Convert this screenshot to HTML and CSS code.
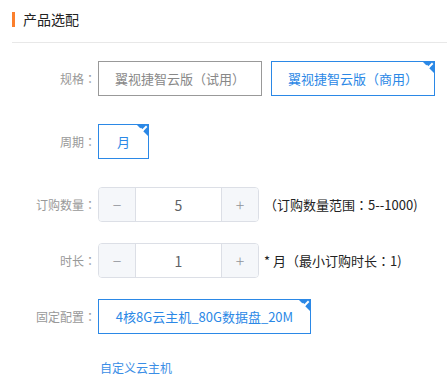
FILE: index.html
```html
<!DOCTYPE html>
<html lang="zh-CN">
<head>
    <meta charset="UTF-8">
    <title>产品选配</title>
    <link rel="stylesheet" href="styles.css">
</head>
<body>

<div class="panel">
    <div class="panel-title"><span>产品选配</span></div>

    <div class="form">
        <!-- 规格 -->
        <div class="form-row row-wide">
            <label class="form-label">规格<i class="colon" lang="zh-TW">：</i></label>
            <div class="options">
                <div class="option spec">翼视捷智云版（试用）</div>
                <div class="option spec active">翼视捷智云版（商用）</div>
            </div>
        </div>

        <!-- 周期 -->
        <div class="form-row row-wide">
            <label class="form-label">周期<i class="colon" lang="zh-TW">：</i></label>
            <div class="options">
                <div class="option period active">月</div>
            </div>
        </div>

        <!-- 订购数量 -->
        <div class="form-row">
            <label class="form-label">订购数量<i class="colon" lang="zh-TW">：</i></label>
            <div class="stepper">
                <span class="step-btn">&minus;</span>
                <input class="step-input" type="text" value="5">
                <span class="step-btn">+</span>
            </div>
            <span class="hint">（订购数量范围<i class="colon" lang="zh-TW">：</i>5--1000)</span>
        </div>

        <!-- 时长 -->
        <div class="form-row">
            <label class="form-label">时长<i class="colon" lang="zh-TW">：</i></label>
            <div class="stepper">
                <span class="step-btn">&minus;</span>
                <input class="step-input" type="text" value="1">
                <span class="step-btn">+</span>
            </div>
            <span class="hint">* 月（最小订购时长<i class="colon" lang="zh-TW">：</i>1)</span>
        </div>

        <!-- 固定配置 -->
        <div class="form-row">
            <label class="form-label">固定配置<i class="colon" lang="zh-TW">：</i></label>
            <div class="options">
                <div class="option config active">4核8G云主机_80G数据盘_20M</div>
            </div>
        </div>

        <div class="links">
            <a href="#">自定义云主机</a>
        </div>
    </div>
</div>

</body>
</html>
```

FILE: styles.css
```css
/* General Styling */
* {
    box-sizing: border-box;
    margin: 0;
    padding: 0;
    font-family: "Noto Sans CJK SC", "Noto Sans", sans-serif;
}

body {
    background: #fff;
    color: #333;
}

/* centered full-width colon */
.colon {
    font-style: normal;
    font-family: "Noto Sans CJK TC", sans-serif;
}

.panel-title {
    margin-left: 12px;
    padding: 12px 0 15px;
    border-bottom: 1px solid #e8e8e8;
}

.panel-title span {
    display: block;
    height: 15px;
    line-height: 15px;
    border-left: 3px solid #fb7f2c;
    padding-left: 8px;
    font-size: 14px;
    color: #222;
}

.form {
    padding-top: 18px;
}

.form-row {
    display: flex;
    align-items: center;
    margin-bottom: 21px;
}

.row-wide {
    margin-bottom: 28px;
}

.form-label {
    width: 96px;
    margin-right: 2px;
    text-align: right;
    font-size: 12px;
    color: #999;
}

.options {
    display: flex;
    gap: 9px;
}

.option {
    position: relative;
    height: 35px;
    line-height: 33px;
    border: 1px solid #999;
    text-align: center;
    font-size: 13px;
    color: #888;
    cursor: pointer;
}

.spec {
    width: 164px;
}

.period {
    width: 51px;
}

.config {
    width: 213px;
}

.option.active {
    border-color: #2b88e6;
    color: #2b88e6;
}

/* corner check */
.option.active::after {
    content: "";
    position: absolute;
    top: -1px;
    right: -1px;
    border-style: solid;
    border-width: 0 13px 13px 0;
    border-color: transparent #2b88e6 transparent transparent;
}

.option.active::before {
    content: "";
    position: absolute;
    top: 1px;
    right: 1px;
    width: 5px;
    height: 2px;
    border-left: 2px solid #fff;
    border-bottom: 2px solid #fff;
    transform: rotate(-45deg);
    z-index: 1;
}

.stepper {
    display: flex;
    width: 161px;
    height: 35px;
    border: 1px solid #dcdfe6;
    border-radius: 4px;
    overflow: hidden;
}

.step-btn {
    width: 37px;
    background: #f5f7fa;
    color: #909399;
    font-size: 16px;
    font-weight: 300;
    line-height: 33px;
    text-align: center;
    cursor: pointer;
}

.step-btn:first-child {
    border-right: 1px solid #dcdfe6;
}

.step-btn:last-child {
    border-left: 1px solid #dcdfe6;
}

.step-input {
    flex: 1;
    width: 0;
    border: none;
    outline: none;
    text-align: center;
    font-size: 14px;
    color: #606266;
}

.hint {
    margin-left: 5px;
    font-size: 13px;
    color: #222;
}

.links {
    padding-left: 100px;
    margin-top: -1px;
}

.links a {
    font-size: 12px;
    color: #3a8ee6;
    text-decoration: none;
}

.links a:hover {
    text-decoration: underline;
}
```
